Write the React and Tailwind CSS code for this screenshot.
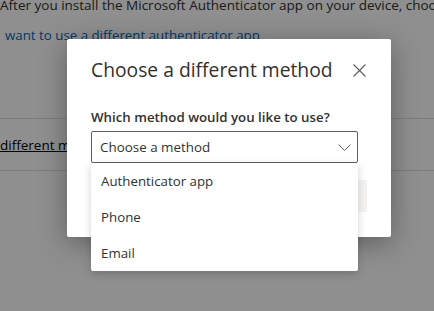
import React from "react";

export default function App() {
  const font = { fontFamily: '"Segoe UI", "Open Sans", "Noto Sans", sans-serif' };
  return (
    <div
      className="relative w-[434px] h-[311px] overflow-hidden bg-white text-[#323130]"
      style={font}
    >
      {/* page behind */}
      <div className="flex flex-col">
        <p className="-mt-[5px] text-[13.5px] leading-5 whitespace-nowrap">
          After you install the Microsoft Authenticator app on your device, choose "Next".
        </p>
        <p className="mt-[10px] pl-[5px] text-[13.3px] leading-5 whitespace-nowrap text-[#0067b8]">
          want to use a different authenticator app
        </p>
        <div className="mt-[73px] h-[53px] border-y border-[#e1dfdd] flex items-center">
          <span className="text-[13.5px] leading-5 underline text-black whitespace-nowrap">
            different method
          </span>
        </div>
      </div>

      {/* overlay */}
      <div className="absolute inset-0 bg-black/[0.44]" />

      {/* dialog */}
      <div className="absolute left-[67px] top-[39px] w-[324px] h-[198px] bg-white rounded-[2px] shadow-[0_6px_28px_rgba(0,0,0,0.35)] px-6 pt-[17px] flex flex-col">
        <div className="flex items-center justify-between h-7">
          <h2 className="text-[19.3px] leading-7 text-[#323130] whitespace-nowrap">
            Choose a different method
          </h2>
          <svg width="13" height="13" viewBox="0 0 13 13" className="mr-[1px]">
            <path d="M0.5 0.5 L12.5 12.5 M12.5 0.5 L0.5 12.5" stroke="#605e5c" strokeWidth="1.1" fill="none" />
          </svg>
        </div>
        <label className="mt-[23px] text-[13.3px] leading-5 font-semibold text-[#323130] whitespace-nowrap">
          Which method would you like to use?
        </label>
        <div className="relative mt-1 w-[267px]">
          <div className="h-[32px] border border-[#605e5c] rounded-[2px] flex items-center justify-between pl-2 pr-[6px]">
            <span className="text-[13.4px] text-[#323130]">Choose a method</span>
            <svg width="13" height="7" viewBox="0 0 13 7">
              <path d="M0.5 0.5 L6.5 6.5 L12.5 0.5" stroke="#605e5c" strokeWidth="1" fill="none" />
            </svg>
          </div>
        </div>
        <div className="mt-[17px] flex justify-end">
          <div className="w-[80px] h-[32px] bg-[#f3f2f1] rounded-[2px]" />
        </div>
      </div>

      {/* dropdown list */}
      <div className="absolute left-[91px] top-[163px] w-[267px] bg-white rounded-[2px] shadow-[0_3px_8px_rgba(0,0,0,0.18)] flex flex-col">
        {["Authenticator app", "Phone", "Email"].map((t) => (
          <div key={t} className="h-9 flex items-center pl-[10px] pt-[2px] text-[13.3px] text-[#323130]">
            {t}
          </div>
        ))}
      </div>
    </div>
  );
}
